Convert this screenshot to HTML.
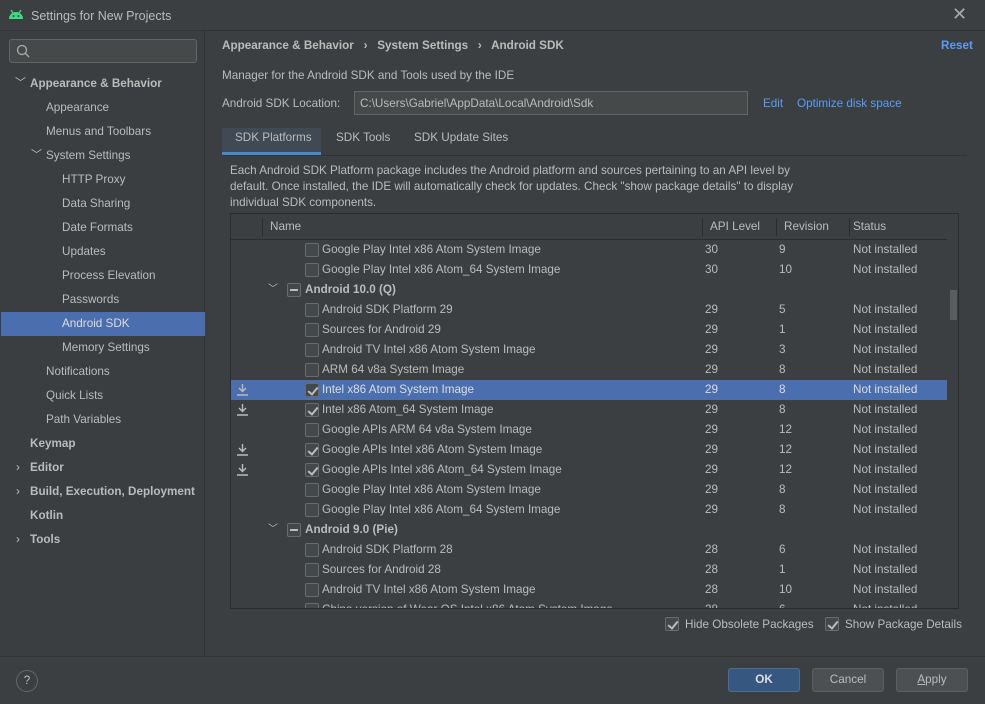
<!DOCTYPE html><html><head><style>
*{box-sizing:border-box;margin:0;padding:0}
body{width:985px;height:704px;background:#3c3f41;font-family:"Liberation Sans",sans-serif;font-size:11.7px;color:#bbbbbb;position:relative;overflow:hidden}
.a{position:absolute;white-space:nowrap}
.title{left:0;top:0;width:985px;height:31px;background:#3c3f41;border-bottom:1px solid #323232}
.side{left:0;top:31px;width:205px;height:625px;background:#3b3e40;border-right:1px solid #323232}
.si{position:absolute;height:24px;line-height:24px}
.b{font-weight:bold}
.cb{position:absolute;width:14px;height:14px;border:1px solid #6b6b6b;border-radius:2px;background:#43494a}
.chk::after{content:"";position:absolute;left:4px;top:1px;width:4px;height:8px;border:solid #bbb;border-width:0 2px 2px 0;transform:rotate(40deg)}
.row{position:absolute;left:231px;width:716px;height:20px;line-height:20px}
.row span{position:absolute}
.link{color:#589df6}
.btn{position:absolute;top:668px;height:24px;border:1px solid #5e6060;border-radius:3px;background:#4c5052;text-align:center;line-height:22px}
.dl{position:absolute;left:6px;width:11px;height:12px}
</style></head><body>
<div class="a title"></div>
<svg class="a" style="left:8px;top:8px" width="16" height="12" viewBox="0 0 16 12"><path d="M1 11a7 7 0 0 1 14 0z" fill="#3ddc84"/><path d="M3 2l2 3M13 2l-2 3" stroke="#3ddc84" stroke-width="1.3"/><circle cx="5.5" cy="8" r="1" fill="#3c3f41"/><circle cx="10.5" cy="8" r="1" fill="#3c3f41"/></svg>
<div class="a" style="left:31px;top:9px;font-size:12.5px;color:#bbb">Settings for New Projects</div>
<div class="a" style="left:952px;top:4px;font-size:18px;color:#aaa">✕</div>
<div class="a side"></div>
<div class="a" style="left:9px;top:39px;width:188px;height:24px;border:1px solid #646464;border-radius:3px;background:#45494a"></div>
<svg class="a" style="left:16px;top:44px" width="14" height="14"><circle cx="6" cy="6" r="4.5" stroke="#aaa" fill="none" stroke-width="1.3"/><path d="M9 9l4 4" stroke="#aaa" stroke-width="1.3"/></svg>
<div class="si b" style="left:30px;top:72px">Appearance &amp; Behavior</div><div class="si" style="left:15px;top:71px;font-size:11px">﹀</div>
<div class="si" style="left:46px;top:96px">Appearance</div>
<div class="si" style="left:46px;top:120px">Menus and Toolbars</div>
<div class="si" style="left:46px;top:144px">System Settings</div><div class="si" style="left:31px;top:143px;font-size:11px">﹀</div>
<div class="si" style="left:62px;top:168px">HTTP Proxy</div>
<div class="si" style="left:62px;top:192px">Data Sharing</div>
<div class="si" style="left:62px;top:216px">Date Formats</div>
<div class="si" style="left:62px;top:240px">Updates</div>
<div class="si" style="left:62px;top:264px">Process Elevation</div>
<div class="si" style="left:62px;top:288px">Passwords</div>
<div class="si" style="left:1px;top:312px;width:204px;height:24px;background:#4b6eaf"></div>
<div class="si" style="left:62px;top:312px;color:#ddd">Android SDK</div>
<div class="si" style="left:62px;top:336px">Memory Settings</div>
<div class="si" style="left:46px;top:360px">Notifications</div>
<div class="si" style="left:46px;top:384px">Quick Lists</div>
<div class="si" style="left:46px;top:408px">Path Variables</div>
<div class="si b" style="left:30px;top:432px">Keymap</div>
<div class="si b" style="left:30px;top:456px">Editor</div><div class="si" style="left:16px;top:456px">›</div>
<div class="si b" style="left:30px;top:480px">Build, Execution, Deployment</div><div class="si" style="left:16px;top:480px">›</div>
<div class="si b" style="left:30px;top:504px">Kotlin</div>
<div class="si b" style="left:30px;top:528px">Tools</div><div class="si" style="left:16px;top:528px">›</div>

<div class="a b" style="left:222px;top:39px">Appearance &amp; Behavior &nbsp;&nbsp;›&nbsp;&nbsp; System Settings &nbsp;&nbsp;›&nbsp;&nbsp; Android SDK</div>
<div class="a b link" style="left:941px;top:39px">Reset</div>
<div class="a" style="left:222px;top:69px">Manager for the Android SDK and Tools used by the IDE</div>
<div class="a" style="left:222px;top:97px">Android SDK Location:</div>
<div class="a" style="left:354px;top:91px;width:394px;height:24px;border:1px solid #646464;background:#45494a;padding:5px 5px">C:\Users\Gabriel\AppData\Local\Android\Sdk</div>
<div class="a link" style="left:763px;top:97px">Edit</div>
<div class="a link" style="left:797px;top:97px">Optimize disk space</div>
<div class="a" style="left:222px;top:128px;width:99px;height:27px;border-bottom:3px solid #4a88c7;background:#404a55"></div>
<div class="a" style="left:235px;top:131px">SDK Platforms</div>
<div class="a" style="left:336px;top:131px">SDK Tools</div>
<div class="a" style="left:414px;top:131px">SDK Update Sites</div>
<div class="a" style="left:222px;top:155px;width:745px;height:1px;background:#323232"></div>
<div class="a" style="left:230px;top:163px;line-height:16px;white-space:normal;width:590px">Each Android SDK Platform package includes the Android platform and sources pertaining to an API level by default. Once installed, the IDE will automatically check for updates. Check "show package details" to display individual SDK components.</div>
<div class="a" style="left:230px;top:213px;width:729px;height:396px;border:1px solid #2b2b2b;overflow:hidden">
<div style="position:absolute;left:0;top:0;width:716px;height:26px;border-bottom:1px solid #2b2b2b"></div>
<div style="position:absolute;left:31px;top:4px;width:1px;height:18px;background:#2b2b2b"></div>
<div style="position:absolute;left:471px;top:4px;width:1px;height:18px;background:#2b2b2b"></div>
<div style="position:absolute;left:545px;top:4px;width:1px;height:18px;background:#2b2b2b"></div>
<div style="position:absolute;left:618px;top:4px;width:1px;height:18px;background:#2b2b2b"></div>
<div style="position:absolute;left:39px;top:6px">Name</div>
<div style="position:absolute;left:479px;top:6px">API Level</div>
<div style="position:absolute;left:553px;top:6px">Revision</div>
<div style="position:absolute;left:622px;top:6px">Status</div>
<div style="position:absolute;left:719px;top:76px;width:7px;height:30px;background:#5a5d5f"></div>
</div>
<div id="rows"></div>
<div class="cb chk" style="left:665px;top:617px"></div><div class="a" style="left:685px;top:618px">Hide Obsolete Packages</div>
<div class="cb chk" style="left:825px;top:617px"></div><div class="a" style="left:845px;top:618px">Show Package Details</div>
<div class="a" style="left:0;top:656px;width:985px;height:1px;background:#323232"></div>
<div class="a" style="left:16px;top:670px;width:22px;height:22px;border:1px solid #666;border-radius:50%;text-align:center;line-height:20px">?</div>
<div class="btn b" style="left:728px;width:72px;background:#365880;border-color:#4c708c;color:#ddd">OK</div>
<div class="btn" style="left:812px;width:72px">Cancel</div>
<div class="btn" style="left:896px;width:72px"><u>A</u>pply</div>
<script>
var R=[[2,0,0,"Google Play Intel x86 Atom System Image","30","9"],[2,0,0,"Google Play Intel x86 Atom_64 System Image","30","10"],[1,0,0,"Android 10.0 (Q)"],
[2,0,0,"Android SDK Platform 29","29","5"],[2,0,0,"Sources for Android 29","29","1"],[2,0,0,"Android TV Intel x86 Atom System Image","29","3"],[2,0,0,"ARM 64 v8a System Image","29","8"],
[2,1,1,"Intel x86 Atom System Image","29","8",1],[2,1,1,"Intel x86 Atom_64 System Image","29","8"],[2,0,0,"Google APIs ARM 64 v8a System Image","29","12"],
[2,1,1,"Google APIs Intel x86 Atom System Image","29","12"],[2,1,1,"Google APIs Intel x86 Atom_64 System Image","29","12"],[2,0,0,"Google Play Intel x86 Atom System Image","29","8"],
[2,0,0,"Google Play Intel x86 Atom_64 System Image","29","8"],[1,0,0,"Android 9.0 (Pie)"],[2,0,0,"Android SDK Platform 28","28","6"],[2,0,0,"Sources for Android 28","28","1"],
[2,0,0,"Android TV Intel x86 Atom System Image","28","10"],[2,0,0,"China version of Wear OS Intel x86 Atom System Image","28","6"]];
var h="";R.forEach(function(r,i){var t=240+i*20;var sel=r[6];
h+='<div class="row" style="top:'+t+'px;'+(sel?'background:#4b6eaf;color:#ddd':'')+'">';
if(r[2])h+='<svg class="dl" style="top:4px" viewBox="0 0 11 12"><path d="M5.5 0v7M2 4l3.5 3.5L9 4M0 11h11" stroke="#bbb" stroke-width="1.4" fill="none"/></svg>';
if(r[0]==1){h+='<span style="left:37px;font-size:10px">﹀</span><div class="cb" style="left:56px;top:3px"><div style="position:absolute;left:2px;top:5px;width:8px;height:2px;background:#bbb"></div></div><span class="b" style="left:74px">'+r[3]+'</span>';}
else{h+='<div class="cb'+(r[1]?' chk':'')+'" style="left:74px;top:3px"></div><span style="left:91px">'+r[3]+'</span><span style="left:474px">'+r[4]+'</span><span style="left:548px">'+r[5]+'</span><span style="left:622px">Not installed</span>';}
h+='</div>';});
document.getElementById('rows').innerHTML='<div style="position:absolute;left:0;top:0;width:985px;height:608px;clip-path:inset(240px 0 0 0)">'+h+'</div>';
</script>
</body></html>
